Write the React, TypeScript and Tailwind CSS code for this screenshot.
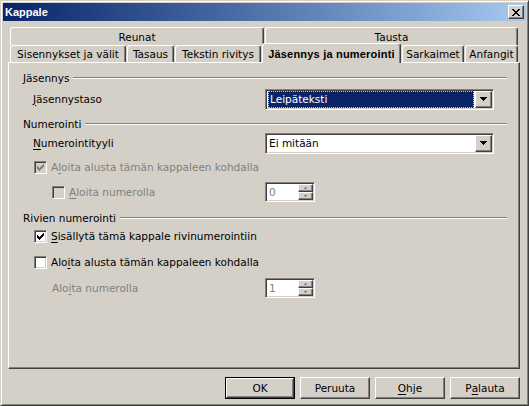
import React from 'react'

// classic 3D bevels
const raised =
  'border border-t-white border-l-white border-r-[#404040] border-b-[#404040] shadow-[inset_-1px_-1px_0_#808080]'
const sunken =
  'border border-t-[#808080] border-l-[#808080] border-r-white border-b-white shadow-[inset_1px_1px_0_#404040,inset_-1px_-1px_0_#d4d0c8]'

function Pixels({ rows, color, w, h }: { rows: string[]; color: string; w: number; h: number }) {
  return (
    <svg width={w} height={h} viewBox={`0 0 ${w} ${h}`} shapeRendering="crispEdges">
      {rows.map((row, y) =>
        row.split('').map((c, x) => (c === '#' ? <rect key={`${x}-${y}`} x={x} y={y} width={1} height={1} fill={color} /> : null))
      )}
    </svg>
  )
}

const checkRows = ['......#', '.....##', '#...###', '##.###.', '#####..', '.###...', '..#....']
const closeRows = ['##....##', '.##..##.', '..####..', '...##...', '..####..', '.##..##.', '##....##']
const downRows = ['#######', '.#####.', '..###..', '...#...']

function Check({ checked, disabled }: { checked?: boolean; disabled?: boolean }) {
  return (
    <div
      className={`w-[13px] h-[13px] shrink-0 flex items-center justify-center ${sunken} ${
        disabled ? 'bg-[#d4d0c8]' : 'bg-white'
      }`}
    >
      {checked && <Pixels rows={checkRows} color={disabled ? '#808080' : '#000'} w={7} h={7} />}
    </div>
  )
}

function Combo({ value, focused }: { value: string; focused?: boolean }) {
  return (
    <div className={`w-[229px] h-[21px] flex p-px bg-white ${sunken}`}>
      <div className="flex-1 flex items-center pl-px pr-px">
        {focused ? (
          <div className="w-full h-full flex items-center bg-[#0a246a] text-white border border-dotted border-[#c8c8c8] pl-px">
            {value}
          </div>
        ) : (
          <span className="pl-px">{value}</span>
        )}
      </div>
      <div className={`w-[17px] h-full flex items-center justify-center bg-[#d4d0c8] ${raised}`}>
        <Pixels rows={downRows} color="#000" w={7} h={4} />
      </div>
    </div>
  )
}

function SpinHalf({ up }: { up?: boolean }) {
  return (
    <div className={`w-[15px] h-[8px] flex items-center justify-center bg-[#d4d0c8] ${raised}`}>
      <Pixels rows={up ? ['..#..', '.###.'] : ['.###.', '..#..']} color="#808080" w={5} h={2} />
    </div>
  )
}

function Spin({ value }: { value: string }) {
  return (
    <div className={`w-[50px] h-[20px] flex p-px bg-white ${sunken}`}>
      <div className="flex-1 flex items-center pl-[2px] text-[#808080]">{value}</div>
      <div className="flex flex-col">
        <SpinHalf up />
        <SpinHalf />
      </div>
    </div>
  )
}

function Group({ label }: { label: string }) {
  return (
    <div className="h-[16px] flex items-center pl-[14px] pr-[12px]">
      <span>{label}</span>
      <div className="flex-1 ml-[4px] h-[2px] border-t border-t-[#808080] border-b border-b-white" />
    </div>
  )
}

const U = ({ children }: { children: React.ReactNode }) => <span className="underline underline-offset-[2px]">{children}</span>

const backTabs = [
  { label: 'Reunat', w: 'w-[254px]' },
  { label: 'Tausta', w: 'w-[253px]' },
]

const frontTabs = [
  { label: 'Sisennykset ja välit', w: 'w-[116px]' },
  { label: 'Tasaus', w: 'w-[47px]' },
  { label: 'Tekstin rivitys', w: 'w-[86px]' },
  { label: 'Jäsennys ja numerointi', w: 'w-[139px]', active: true },
  { label: 'Sarkaimet', w: 'w-[62px]' },
  { label: 'Anfangit', w: 'w-[53px]' },
]

const tabEdge =
  'border-t border-l border-r border-t-white border-l-white border-r-[#404040] shadow-[inset_-1px_0_0_#808080] rounded-t-[3px]'

function Button({ children, isDefault }: { children: React.ReactNode; isDefault?: boolean }) {
  if (isDefault) {
    return (
      <div className="w-[70px] h-[22px] border border-black">
        <div className={`w-full h-full flex items-center justify-center ${raised}`}>{children}</div>
      </div>
    )
  }
  return <div className={`w-[70px] h-[22px] flex items-center justify-center ${raised}`}>{children}</div>
}

export default function App() {
  return (
    <div
      className="w-[529px] h-[406px] bg-[#d4d0c8] text-black text-[10.5px] leading-[13px] font-['DejaVu_Sans',Verdana,sans-serif] border border-t-[#d4d0c8] border-l-[#d4d0c8] border-r-[#404040] border-b-[#404040] shadow-[inset_1px_1px_0_#fff,inset_-1px_-1px_0_#808080] p-[2px] overflow-hidden"
    >
      {/* Title bar */}
      <div className="h-[18px] flex items-center justify-between bg-linear-to-r from-[#0a246a] to-[#a6caf0] pl-[2px] pr-[2px]">
        <span className="text-white font-bold text-[11px] font-['Liberation_Sans',Arial,sans-serif]">Kappale</span>
        <div className={`w-[16px] h-[14px] flex items-center justify-center bg-[#d4d0c8] ${raised}`}>
          <Pixels rows={closeRows} color="#000" w={8} h={7} />
        </div>
      </div>

      <div className="pl-[5px] pr-[6px] pt-[6px]">
        {/* Tab rows */}
        <div className="flex gap-px pl-[2px] h-[18px]">
          {backTabs.map((t) => (
            <div key={t.label} className={`${t.w} h-full flex items-center justify-center pt-px ${tabEdge}`}>
              {t.label}
            </div>
          ))}
        </div>
        <div className="flex gap-px pl-[2px] h-[17px]">
          {frontTabs.map((t) =>
            t.active ? (
              <div
                key={t.label}
                className={`${t.w} relative z-10 -mt-[2px] -mb-px h-[20px] flex items-start justify-center pt-[4px] font-bold text-[11px] font-['Liberation_Sans',Arial,sans-serif] tracking-[0.2px] bg-[#d4d0c8] ${tabEdge}`}
              >
                {t.label}
              </div>
            ) : (
              <div key={t.label} className={`${t.w} h-full flex items-center justify-center pt-px whitespace-nowrap ${tabEdge}`}>
                {t.label}
              </div>
            )
          )}
        </div>

        {/* Tab page */}
        <div className={`h-[307px] pt-[7px] ${raised}`}>
          <Group label="Jäsennys" />
          <div className="mt-[2px] h-[22px] flex items-center pl-[24px]">
            <span className="w-[232px]">
              <U>J</U>äsennystaso
            </span>
            <Combo value="Leipäteksti" focused />
          </div>

          <div className="mt-[6px]">
            <Group label="Numerointi" />
          </div>
          <div className="h-[22px] flex items-center pl-[24px]">
            <span className="w-[232px]">
              <U>N</U>umerointityyli
            </span>
            <Combo value="Ei mitään" />
          </div>
          <div className="mt-[5px] h-[16px] flex items-center gap-[4px] pl-[25px] text-[#808080]">
            <Check checked disabled />
            <span>
              A<U>l</U>oita alusta tämän kappaleen kohdalla
            </span>
          </div>
          <div className="mt-[7px] h-[20px] flex items-center pl-[43px] text-[#808080]">
            <div className="w-[213px] flex items-center gap-[4px]">
              <Check disabled />
              <span>
                <U>A</U>loita numerolla
              </span>
            </div>
            <Spin value="0" />
          </div>

          <div className="mt-[8px]">
            <Group label="Rivien numerointi" />
          </div>
          <div className="mt-[2px] h-[16px] flex items-center gap-[4px] pl-[25px]">
            <Check checked />
            <span>
              <U>S</U>isällytä tämä kappale rivinumerointiin
            </span>
          </div>
          <div className="mt-[10px] h-[16px] flex items-center gap-[4px] pl-[25px]">
            <Check />
            <span>
              Alo<U>i</U>ta alusta tämän kappaleen kohdalla
            </span>
          </div>
          <div className="mt-[8px] h-[20px] flex items-center pl-[43px]">
            <span className="w-[213px] text-[#808080]">
              Alo<U>i</U>ta numerolla
            </span>
            <Spin value="1" />
          </div>
        </div>

        {/* Buttons */}
        <div className="mt-[8px] flex justify-end gap-[5px]">
          <Button isDefault>OK</Button>
          <Button>Peruuta</Button>
          <Button>
            <U>O</U>hje
          </Button>
          <Button>
            P<U>a</U>lauta
          </Button>
        </div>
      </div>
    </div>
  )
}
